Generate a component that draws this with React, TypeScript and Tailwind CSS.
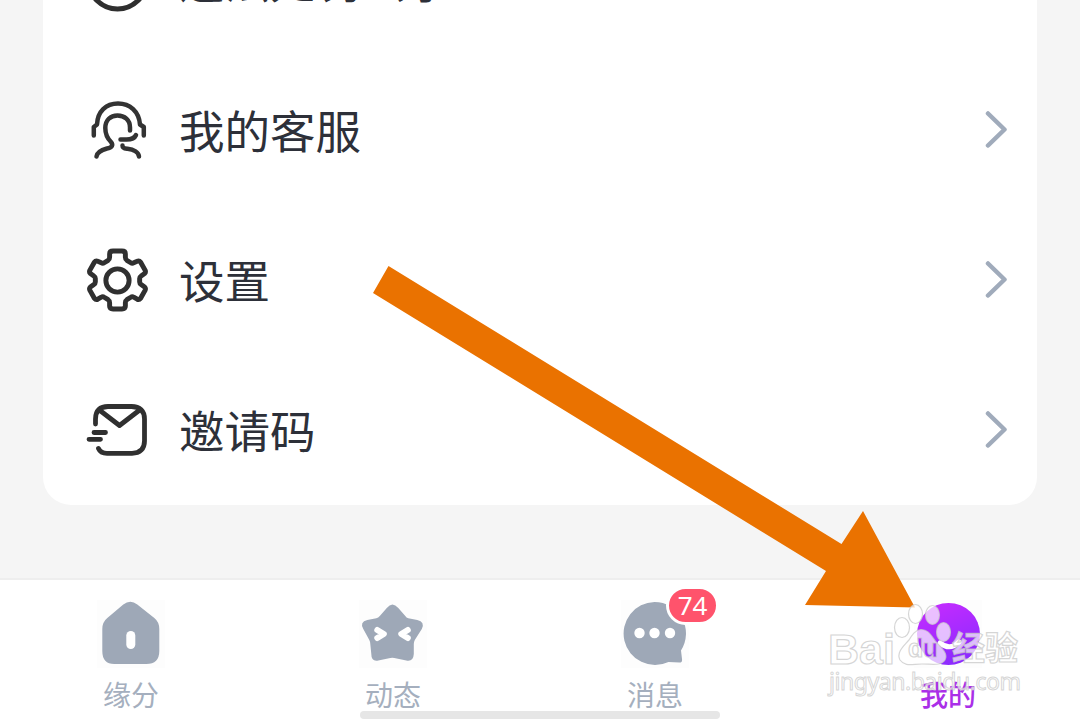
import type { ReactNode } from 'react';

function Chevron() {
  return (
    <svg className="h-10 w-6" viewBox="0.500 0 24 40" fill="none">
      <path
        d="M3.500 3.500 20 19.500 3.500 35.500"
        stroke="#a0abbb"
        strokeWidth="4.500"
        strokeLinecap="round"
        strokeLinejoin="round"
      />
    </svg>
  );
}

function InfoIcon() {
  return (
    <svg className="h-16 w-16" viewBox="0 0 64 64" fill="none">
      <circle cx="32.500" cy="32" r="29" stroke="#2f2f2f" strokeWidth="5" />
    </svg>
  );
}

function ServiceIcon() {
  return (
    <svg
      className="h-16 w-16"
      viewBox="0 0 64 64"
      fill="none"
      stroke="#333"
      strokeWidth="4.500"
      strokeLinecap="round"
      strokeLinejoin="round"
    >
      <path d="M8.800 37.500V29L12 26.500C12.500 13.500 21 5.500 33 5.500S54 13.500 55 26.500L58.800 29V37.500" />
      <path d="M11.500 58.500C12 54 16.500 52 22 50.500C27 50 28.500 47 26 44C22 40 20.300 36 20.300 30C20.300 22 25.500 17.500 32.500 17.500S45 22 45 29.500V32.500" />
      <path d="M35.500 41.500H41.500C47 41.500 49.500 40.500 51 37" />
      <path d="M37.500 47.500C37.500 50.500 39.500 50.500 42.500 50.800C49 51.500 53.500 54.500 54 58.500" />
    </svg>
  );
}

function GearIcon() {
  return (
    <svg
      className="h-16 w-16"
      viewBox="-0.500 -0.500 65 65"
      fill="none"
      stroke="#303030"
      strokeWidth="5"
      strokeLinejoin="round"
    >
      <path d="M28 2.500H37Q40.500 2.500 40.500 5.500V9Q40.500 11 42 12L46 14.500Q47.500 15.500 49 14.500L52.500 13Q54.500 12 56 14L60.500 22Q61.500 24 60 25.500L56.500 28Q55 29 55 30.500V34Q55 35.500 56.500 36.500L60 39Q61.500 40.500 60.500 42.500L56 50.500Q54.500 52.500 52.500 51.500L49 49.500Q47.500 48.500 46 49.500L42 52Q40.500 53 40.500 55V58.500Q40.500 61.500 37 61.500H28Q24.500 61.500 24.500 58.500V55Q24.500 53 23 52L19 49.500Q17.500 48.500 16 49.500L12.500 51.500Q10.500 52.500 9 50.500L4.500 42.500Q3.500 40.500 5 39L8.500 36.500Q10 35.500 10 34V30.500Q10 29 8.500 28L5 25.500Q3.500 24 4.500 22L9 14Q10.500 12 12.500 13L16 14.500Q17.500 15.500 19 14.500L23 12Q24.500 11 24.500 9V5.500Q24.500 2.500 28 2.500Z" />
      <circle cx="32.500" cy="32.500" r="11.800" />
    </svg>
  );
}

function MailIcon() {
  return (
    <svg
      className="h-16 w-16"
      viewBox="0 0 64 64"
      fill="none"
      stroke="#303030"
      strokeWidth="4.800"
      strokeLinecap="round"
      strokeLinejoin="round"
    >
      <path d="M10.500 26V21C10.500 12.500 15 8.500 23 8.500H46.500C55 8.500 59.500 13 59.500 21V43C59.500 51 55 55.300 47 55.300H22C17.500 55.300 15 54 13.500 50.500" />
      <path d="M15 12.500 34.500 27.500 54 12.500" />
      <path d="M9 34.500H20.500M4 41.300H15.500" />
    </svg>
  );
}

function Row({ icon, label }: { icon: ReactNode; label: string }) {
  return (
    <div className="flex h-[150px] shrink-0 items-center pr-[28px] pl-[42px]">
      {icon}
      <span className="mb-[2px] ml-[30px] grow text-[45.5px] leading-[60px] text-[#2d3039]">
        {label}
      </span>
      <Chevron />
    </div>
  );
}

function HomeIcon() {
  return (
    <svg className="h-[68px] w-[68px]" viewBox="0.700 0 68 68">
      <path
        d="M27 4.500Q34 -1 41 4.500L58 18Q63 22 63 29V51Q63 64 50 64H18Q6 64 6 51V29Q6 22 11 18Z"
        fill="#9ea8b7"
      />
      <rect x="30" y="31" width="9" height="18" rx="4.500" fill="#fff" />
    </svg>
  );
}

function StarIcon() {
  return (
    <svg className="h-[68px] w-[68px]" viewBox="0.700 0 68 68" fill="none">
      <path
        d="M28.500 8Q34 1 40 8L47 16Q48 18 50 18.300L59 20Q67 22 63.500 29L56.500 40Q55.500 42 55.500 44V54Q55 62 48 60.500L36 58Q34 57.500 32 58L20 60.500Q13 62 13 54L12 44Q12 42 11 40L5 29Q1 22 9 20L18 18.300Q20 18 21.500 16Z"
        fill="#9ea8b7"
      />
      <path
        d="M19 30 25.500 34 19 38M49.500 30 43 34 49.500 38"
        stroke="#fff"
        strokeWidth="6"
        strokeLinecap="round"
        strokeLinejoin="round"
      />
    </svg>
  );
}

function ChatIcon() {
  return (
    <svg className="h-[68px] w-[68px]" viewBox="0.500 0 68 68">
      <path
        d="M34 2A31.500 31.500 0 1 0 48 62L59 62.500Q62 62.500 61.500 59L60.500 50.500A31.500 31.500 0 0 0 34 2Z"
        fill="#9ea8b7"
      />
      <circle cx="19" cy="33" r="5.200" fill="#fff" />
      <circle cx="34" cy="33" r="5.200" fill="#fff" />
      <circle cx="49.500" cy="33" r="5.200" fill="#fff" />
    </svg>
  );
}

function MineIcon() {
  return (
    <svg className="h-[68px] w-[68px]" viewBox="0 0 68 68" fill="none">
      <defs>
        <linearGradient id="mine" x1="0.200" y1="0" x2="0.600" y2="1">
          <stop offset="0" stopColor="#c52bff" />
          <stop offset="1" stopColor="#8b2bff" />
        </linearGradient>
      </defs>
      <ellipse cx="34.500" cy="34" rx="31.500" ry="31" fill="url(#mine)" />
      <path
        d="M26 43Q36 51 45 42"
        stroke="#fff"
        strokeWidth="5"
        strokeLinecap="round"
      />
    </svg>
  );
}

function Tab({
  icon,
  label,
  badge,
  active,
}: {
  icon: ReactNode;
  label: string;
  badge?: string;
  active?: boolean;
}) {
  return (
    <div
      className={
        active
          ? 'flex grow flex-col items-center pl-[30px]'
          : 'flex w-[262px] flex-col items-center'
      }
    >
      <div className="relative mt-[20px] h-[68px] bg-[#fdfdfd]">
        {icon}
        {badge && (
          <span className="absolute -top-[14px] left-[45px] flex h-[39px] w-[53px] items-center justify-center rounded-full border-[3px] border-white bg-[#ff536c] font-['Noto_Sans'] text-[26px] text-white">
            {badge}
          </span>
        )}
      </div>
      <span
        className={
          active
            ? 'mt-[6px] text-[28px] leading-[40px] font-medium text-[#aa2fe8]'
            : 'mt-[6px] text-[28px] leading-[40px] text-[#a5afbe]'
        }
      >
        {label}
      </span>
    </div>
  );
}

function Arrow() {
  return (
    <svg
      className="absolute top-[260px] left-[370px] h-[350px] w-[550px]"
      viewBox="370 260 550 350"
    >
      <path
        d="M388.500 266 841.500 544 863 511 915 607.500 805 605 826 571 373 293Z"
        fill="#ea7200"
      />
    </svg>
  );
}

function Watermark() {
  return (
    <svg
      className="absolute top-[590px] left-[820px] h-[120px] w-[220px]"
      viewBox="820 590 220 120"
      fill="#fff"
      fillOpacity="0.700"
      stroke="#c8c8c8"
      strokeOpacity="0.750"
      strokeWidth="1.200"
    >
      <mask id="paw" maskUnits="userSpaceOnUse" x="820" y="590" width="220" height="120">
        <rect
          x="820"
          y="590"
          width="220"
          height="120"
          fill="#fff"
          fillOpacity="1"
          stroke="none"
        />
        <text
          x="908"
          y="657"
          textLength="30"
          fill="#000"
          fillOpacity="1"
          stroke="none"
          className="font-['Liberation_Sans'] text-[25px] font-bold"
        >
          du
        </text>
      </mask>
      <ellipse cx="902" cy="627.500" rx="7.500" ry="10" />
      <ellipse cx="915.500" cy="614" rx="7" ry="9.500" />
      <ellipse cx="932.500" cy="615" rx="7" ry="9.500" />
      <ellipse cx="943.500" cy="632" rx="7" ry="9.500" />
      <path
        d="M921 629.500C930 629.500 932 638 937 643C944 650 948 655 945 660C941 666 933 664 922 664C912 664 905 667 900 660C896 652 904 646 909 640C912 635 915 630 921 629.500Z"
        mask="url(#paw)"
      />
      <text
        x="908"
        y="657"
        textLength="30"
        fill="none"
        className="font-['Liberation_Sans'] text-[25px] font-bold"
      >
        du
      </text>
      <text
        x="828"
        y="663.500"
        textLength="67"
        className="font-['Liberation_Sans'] text-[43px] font-bold"
      >
        Bai
      </text>
      <text
        x="952"
        y="660"
        textLength="66"
        className="font-['Noto_Sans_CJK_SC'] text-[33px] font-bold"
      >
        经验
      </text>
      <text
        x="829"
        y="690"
        textLength="192"
        strokeWidth="1"
        className="font-['Noto_Sans'] text-[23px]"
      >
        jingyan.baidu.com
      </text>
    </svg>
  );
}

export default function App() {
  return (
    <div className="relative flex h-[719px] w-[1080px] flex-col overflow-hidden bg-[#f5f5f5] font-['Noto_Sans_CJK_SC',sans-serif]">
      <main className="mx-[43px] flex h-[505px] flex-col justify-end overflow-hidden rounded-b-[28px] bg-white">
        <Row icon={<InfoIcon />} label="违法处罚公示" />
        <Row icon={<ServiceIcon />} label="我的客服" />
        <Row icon={<GearIcon />} label="设置" />
        <Row icon={<MailIcon />} label="邀请码" />
      </main>
      <nav className="mt-[73px] flex h-[141px] border-t-2 border-[#eee] bg-white">
        <Tab icon={<HomeIcon />} label="缘分" />
        <Tab icon={<StarIcon />} label="动态" />
        <Tab icon={<ChatIcon />} label="消息" badge="74" />
        <Tab icon={<MineIcon />} label="我的" active />
      </nav>
      <div className="absolute bottom-0 left-[360px] h-[8px] w-[360px] rounded-full bg-[#e6e6e6]" />
      <Arrow />
      <Watermark />
    </div>
  );
}
